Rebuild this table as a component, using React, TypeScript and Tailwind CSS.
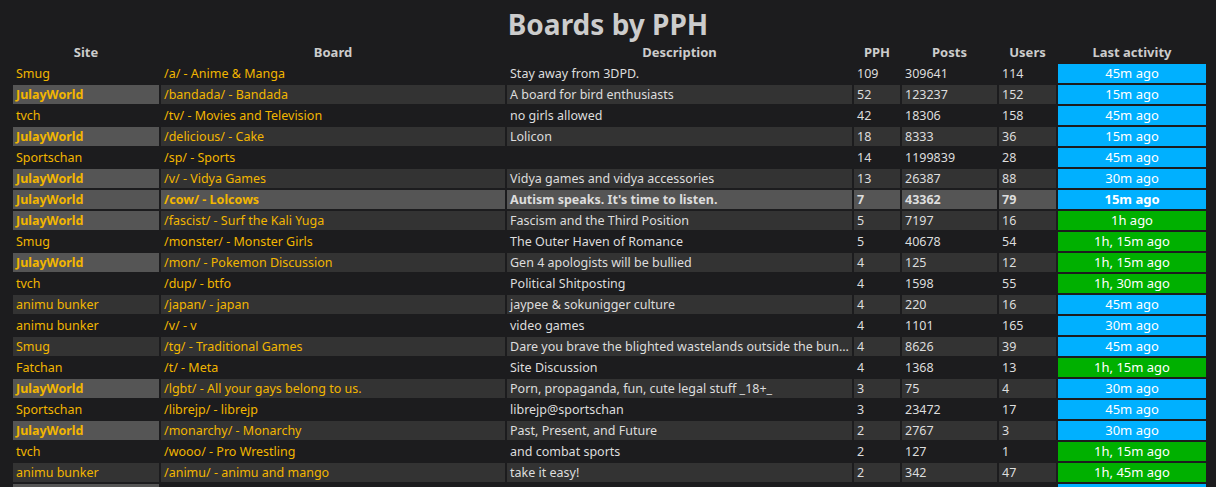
type Row = {
  site: string;
  board: string;
  desc: string;
  pph: number;
  posts: number;
  users: number;
  last: string;
  old?: boolean;
  hot?: boolean;
};

const rows: Row[] = [
  { site: "Smug", board: "/a/ - Anime & Manga", desc: "Stay away from 3DPD.", pph: 109, posts: 309641, users: 114, last: "45m ago" },
  { site: "JulayWorld", board: "/bandada/ - Bandada", desc: "A board for bird enthusiasts", pph: 52, posts: 123237, users: 152, last: "15m ago" },
  { site: "tvch", board: "/tv/ - Movies and Television", desc: "no girls allowed", pph: 42, posts: 18306, users: 158, last: "45m ago" },
  { site: "JulayWorld", board: "/delicious/ - Cake", desc: "Lolicon", pph: 18, posts: 8333, users: 36, last: "15m ago" },
  { site: "Sportschan", board: "/sp/ - Sports", desc: "", pph: 14, posts: 1199839, users: 28, last: "45m ago" },
  { site: "JulayWorld", board: "/v/ - Vidya Games", desc: "Vidya games and vidya accessories", pph: 13, posts: 26387, users: 88, last: "30m ago" },
  { site: "JulayWorld", board: "/cow/ - Lolcows", desc: "Autism speaks. It's time to listen.", pph: 7, posts: 43362, users: 79, last: "15m ago", hot: true },
  { site: "JulayWorld", board: "/fascist/ - Surf the Kali Yuga", desc: "Fascism and the Third Position", pph: 5, posts: 7197, users: 16, last: "1h ago", old: true },
  { site: "Smug", board: "/monster/ - Monster Girls", desc: "The Outer Haven of Romance", pph: 5, posts: 40678, users: 54, last: "1h, 15m ago", old: true },
  { site: "JulayWorld", board: "/mon/ - Pokemon Discussion", desc: "Gen 4 apologists will be bullied", pph: 4, posts: 125, users: 12, last: "1h, 15m ago", old: true },
  { site: "tvch", board: "/dup/ - btfo", desc: "Political Shitposting", pph: 4, posts: 1598, users: 55, last: "1h, 30m ago", old: true },
  { site: "animu bunker", board: "/japan/ - japan", desc: "jaypee & sokunigger culture", pph: 4, posts: 220, users: 16, last: "45m ago" },
  { site: "animu bunker", board: "/v/ - v", desc: "video games", pph: 4, posts: 1101, users: 165, last: "30m ago" },
  { site: "Smug", board: "/tg/ - Traditional Games", desc: "Dare you brave the blighted wastelands outside the bun...", pph: 4, posts: 8626, users: 39, last: "45m ago" },
  { site: "Fatchan", board: "/t/ - Meta", desc: "Site Discussion", pph: 4, posts: 1368, users: 13, last: "1h, 15m ago", old: true },
  { site: "JulayWorld", board: "/lgbt/ - All your gays belong to us.", desc: "Porn, propaganda, fun, cute legal stuff _18+_", pph: 3, posts: 75, users: 4, last: "30m ago" },
  { site: "Sportschan", board: "/librejp/ - librejp", desc: "librejp@sportschan", pph: 3, posts: 23472, users: 17, last: "45m ago" },
  { site: "JulayWorld", board: "/monarchy/ - Monarchy", desc: "Past, Present, and Future", pph: 2, posts: 2767, users: 3, last: "30m ago" },
  { site: "tvch", board: "/wooo/ - Pro Wrestling", desc: "and combat sports", pph: 2, posts: 127, users: 1, last: "1h, 15m ago", old: true },
  { site: "animu bunker", board: "/animu/ - animu and mango", desc: "take it easy!", pph: 2, posts: 342, users: 47, last: "1h, 45m ago", old: true },
  { site: "JulayWorld", board: "/b/ - Random", desc: "", pph: 2, posts: 9120, users: 30, last: "15m ago" },
];

const App = () => {
  return (
    <div className="min-h-screen bg-[#1c1c1e] font-['Noto_Sans',sans-serif] text-[12.5px] text-[#dddddd]">
      {/* title */}
      <h1 className="pt-[8px] text-center text-[28px] leading-[33px] font-bold text-[#cccccc]">
        Boards by PPH
      </h1>

      <table className="mx-[11px] w-[1197px] table-fixed border-separate border-spacing-[2px]">
        <colgroup>
          <col className="w-[146px]" />
          <col className="w-[344px]" />
          <col className="w-[345px]" />
          <col className="w-[46px]" />
          <col className="w-[95px]" />
          <col className="w-[57px]" />
          <col className="w-[148px]" />
        </colgroup>
        <thead>
          <tr className="h-[19px] text-[13px] leading-[19px] font-bold text-[#cccccc]">
            <th>Site</th>
            <th>Board</th>
            <th>Description</th>
            <th>PPH</th>
            <th>Posts</th>
            <th>Users</th>
            <th>Last activity</th>
          </tr>
        </thead>
        <tbody>
          {rows.map((r, i) => {
            const zebra = i % 2 === 1;
            const cell = r.hot ? "bg-[#555555]" : zebra ? "bg-[#333333]" : "";
            const julay = r.site === "JulayWorld";
            return (
              <tr key={i} className={`h-[19px] leading-[19px] ${r.hot ? "font-bold" : ""}`}>
                <td
                  className={`px-[3px] p-0 truncate text-[#f2b600] ${
                    julay ? "bg-[#555555] font-bold" : cell
                  }`}
                >
                  {r.site}
                </td>
                <td className={`px-[3px] p-0 truncate text-[#f2b600] ${cell}`}>{r.board}</td>
                <td className={`px-[3px] p-0 truncate ${cell}`}>{r.desc}</td>
                <td className={`px-[3px] p-0 ${cell}`}>{r.pph}</td>
                <td className={`px-[3px] p-0 ${cell}`}>{r.posts}</td>
                <td className={`px-[3px] p-0 ${cell}`}>{r.users}</td>
                <td
                  className={`p-0 text-center text-[13px] text-white ${
                    r.old ? "bg-[#00b000]" : "bg-[#00b0ff]"
                  }`}
                >
                  {r.last}
                </td>
              </tr>
            );
          })}
        </tbody>
      </table>
    </div>
  );
};

export default App;
